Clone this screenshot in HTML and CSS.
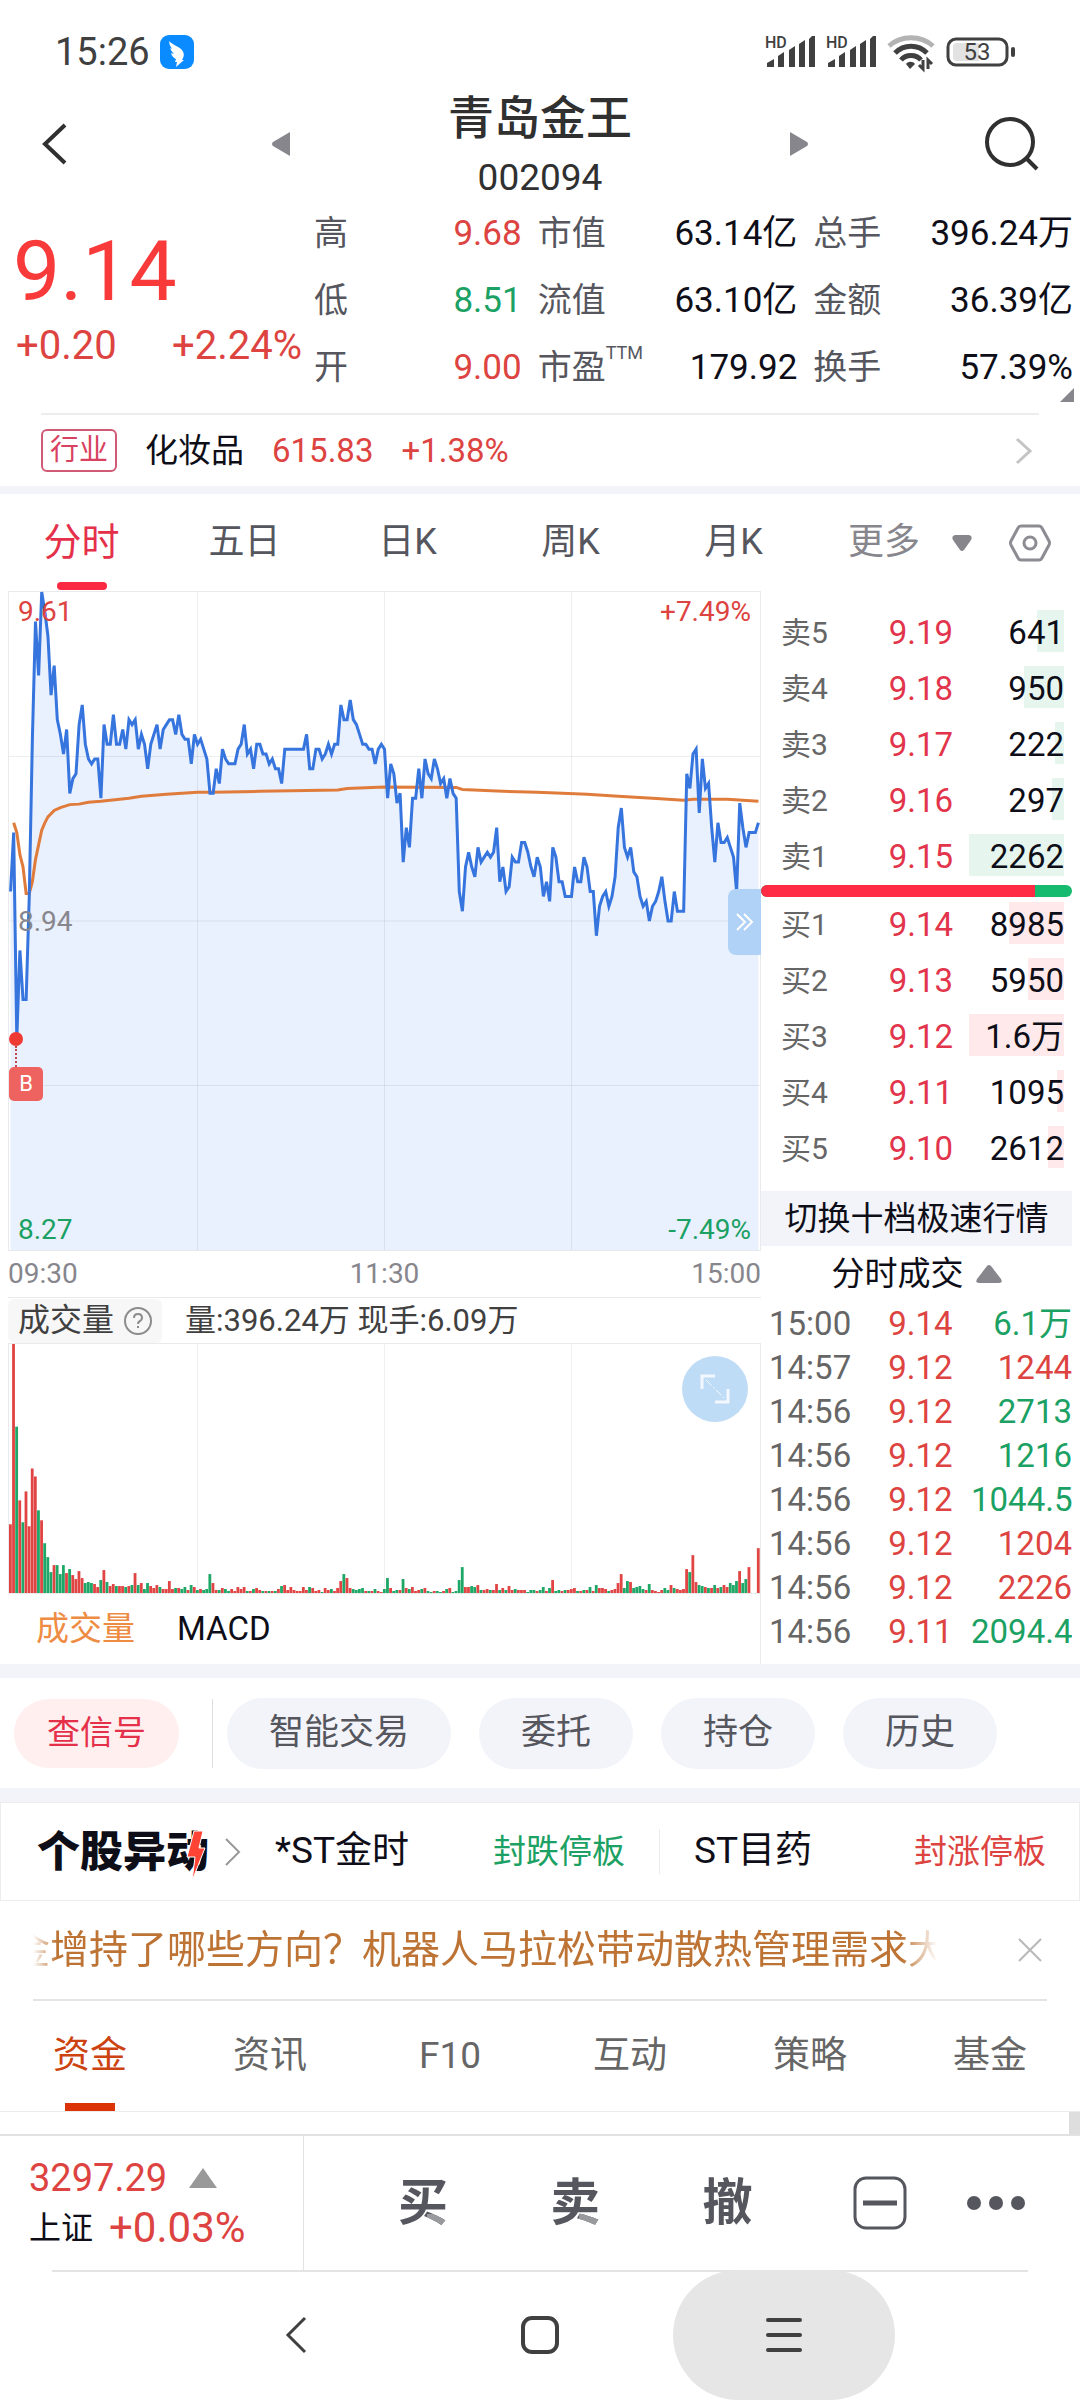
FILE: index.html
```html
<!DOCTYPE html>
<html lang="zh-CN">

<head>
    <meta charset="UTF-8">
    <meta name="viewport" content="width=device-width, initial-scale=1.0">
    <title>青岛金王 002094</title>
    <link rel="stylesheet" href="styles.css">
</head>

<body>
    <div class="status-bar">
        <span class="clock">15:26</span>
        <svg class="app-icon" width="34" height="34" viewBox="0 0 34 34">
            <rect width="34" height="34" rx="9" fill="#0a8bff"/>
            <path d="M9 6c2 3 9 5 13 9q3 4 1 8l-1 2h2l-8 7 1-5h-2l1-3q-4-2-5-6l3 1q-3-3-4-6l2 1q-3-4-3-8z" fill="#fff"/>
        </svg>
        <div class="status-icons">
            <svg width="50" height="34" viewBox="0 0 50 34">
                <text x="0" y="13" class="hd">HD</text>
                <path d="M2 32v-4l7-4v8zM13 32V21l6-4v15zM24 32V15l6-4v21zM34 32V9l6-4v27zM44 32V4l3-3h3v31z" fill="#404040"/>
            </svg>
            <svg width="50" height="34" viewBox="0 0 50 34">
                <text x="0" y="13" class="hd">HD</text>
                <path d="M2 32v-4l7-4v8zM13 32V21l6-4v15zM24 32V15l6-4v21zM34 32V9l6-4v27zM44 32V4l3-3h3v31z" fill="#404040"/>
            </svg>
            <svg width="48" height="36" viewBox="0 0 48 36" fill="none" stroke-width="5">
                <path d="M2 12c12-11 32-11 44 0" stroke="#b3b3b3"/>
                <path d="M8 19c9-9 23-9 32 0M14 26c5-6 15-6 20 0" stroke="#404040"/>
                <path d="M19 30c2-3 7-3 9 0l-5 5z" fill="#404040"/>
                <path d="M36 26v9l-4-4M41 35v-9l4 4" stroke="#404040" stroke-width="3"/>
            </svg>
            <svg width="70" height="30" viewBox="0 0 70 30">
                <rect x="2" y="2" width="59" height="26" rx="8" fill="none" stroke="#404040" stroke-width="3"/>
                <path d="M11 6h22v18H11q-4 0-4-4V10q0-4 4-4z" fill="#e2e2e2"/>
                <rect x="65" y="10" width="4" height="10" rx="2" fill="#404040"/>
                <text x="31" y="23" text-anchor="middle" class="battery">53</text>
            </svg>
        </div>
    </div>

    <header class="title-bar">
        <button type="button" aria-label="返回">
            <svg width="28" height="44" viewBox="0 0 28 44" fill="none" stroke="#303030" stroke-width="4"><path d="M25 3L5 22l20 19"/></svg>
        </button>
        <button type="button" aria-label="上一只">
            <svg width="20" height="26" viewBox="0 0 20 26"><path d="M19 1v24L2 15q-2-2 0-4z" fill="#87868d"/></svg>
        </button>
        <div class="stock-name">
            <h1>青岛金王</h1>
            <span>002094</span>
        </div>
        <button type="button" aria-label="下一只">
            <svg width="20" height="26" viewBox="0 0 20 26"><path d="M1 1v24l17-10q2-2 0-4z" fill="#87868d"/></svg>
        </button>
        <button type="button" class="search" aria-label="搜索">
            <svg width="56" height="56" viewBox="0 0 56 56" fill="none" stroke="#303030" stroke-width="4"><circle cx="26" cy="26" r="23"/><path d="M42 42l11 11"/></svg>
        </button>
    </header>

    <section class="quote">
        <div class="price">
            <strong>9.14</strong>
            <div class="change"><span>+0.20</span><span>+2.24%</span></div>
        </div>
        <dl>
            <div><dt>高</dt><dd class="up">9.68</dd></div>
            <div><dt>低</dt><dd class="down">8.51</dd></div>
            <div><dt>开</dt><dd class="up">9.00</dd></div>
        </dl>
        <dl>
            <div><dt>市值</dt><dd>63.14亿</dd></div>
            <div><dt>流值</dt><dd>63.10亿</dd></div>
            <div><dt>市盈<sup>TTM</sup></dt><dd>179.92</dd></div>
        </dl>
        <dl>
            <div><dt>总手</dt><dd>396.24万</dd></div>
            <div><dt>金额</dt><dd>36.39亿</dd></div>
            <div><dt>换手</dt><dd>57.39%</dd></div>
        </dl>
        <svg class="corner" width="14" height="14" viewBox="0 0 14 14"><path d="M14 0v14H0z" fill="#87868d"/></svg>
    </section>

    <a class="industry" href="#">
        <span class="tag">行业</span>
        <span>化妆品</span>
        <span class="up">615.83</span>
        <span class="up">+1.38%</span>
        <svg width="18" height="28" viewBox="0 0 18 28" fill="none" stroke="#c4c4c4" stroke-width="3"><path d="M2 2l13 12L2 26"/></svg>
    </a>

    <nav class="chart-tabs">
        <button type="button" class="active">分时</button>
        <button type="button">五日</button>
        <button type="button">日K</button>
        <button type="button">周K</button>
        <button type="button">月K</button>
        <div class="more">
            <button type="button">更多
                <svg width="20" height="16" viewBox="0 0 20 16"><path d="M3 0h14q4 1 2 5l-7 10q-2 2-4 0L1 5Q-1 1 3 0z" fill="#87868d"/></svg>
            </button>
            <button type="button" aria-label="设置">
                <svg width="42" height="38" viewBox="0 0 42 38" fill="none" stroke="#8c8c92" stroke-width="3"><path d="M12 2h18q2 0 3 2l7 13q1 2 0 4l-7 13q-1 2-3 2H12q-2 0-3-2L2 21q-1-2 0-4L9 4q1-2 3-2z"/><circle cx="21" cy="19" r="6"/></svg>
            </button>
        </div>
    </nav>

    <main class="market">
        <div class="charts">
            <div class="price-chart">
                <svg id="price-svg" viewBox="0 0 241 134" preserveAspectRatio="none"></svg>
                <span class="label top-left up">9.61</span>
                <span class="label top-right up">+7.49%</span>
                <span class="label middle-left">8.94</span>
                <span class="label bottom-left down">8.27</span>
                <span class="label bottom-right down">-7.49%</span>
                <div class="buy-mark"><i></i><b>B</b></div>
                <button type="button" class="fold" aria-label="收起盘口">
                    <svg width="18" height="18" viewBox="0 0 18 18" fill="none" stroke="#fff" stroke-width="2"><path d="M1 1l8 8-8 8M8 1l8 8-8 8"/></svg>
                </button>
            </div>
            <div class="times"><span>09:30</span><span>11:30</span><span>15:00</span></div>
            <div class="volume-head">
                <button type="button">成交量
                    <svg width="28" height="28" viewBox="0 0 28 28" fill="none" stroke="#8c8c8c" stroke-width="2"><circle cx="14" cy="14" r="13"/><path d="M10 11q0-4 4-4t4 4q0 2-2 3t-2 3M14 19v2"/></svg>
                </button>
                <span>量:396.24万 现手:6.09万</span>
            </div>
            <div class="volume-chart">
                <svg id="volume-svg" viewBox="0 0 241 250" preserveAspectRatio="none"></svg>
                <button type="button" class="expand" aria-label="放大">
                    <svg width="30" height="30" viewBox="0 0 30 30" fill="none" stroke="#fff" stroke-opacity="0.8" stroke-width="3"><path d="M2 15V2h13M28 15v13H15"/><path d="M6 6l18 18" stroke-width="1" stroke-dasharray="8 2 2 2"/></svg>
                </button>
            </div>
            <div class="sub-tabs">
                <button type="button" class="active">成交量</button>
                <button type="button">MACD</button>
            </div>
        </div>

        <aside class="book">
            <table class="orders sell">
                <tr><th>卖5</th><td>9.19</td><td><i style="width: 28%"></i><span>641</span></td></tr>
                <tr><th>卖4</th><td>9.18</td><td><i style="width: 42%"></i><span>950</span></td></tr>
                <tr><th>卖3</th><td>9.17</td><td><i style="width: 10%"></i><span>222</span></td></tr>
                <tr><th>卖2</th><td>9.16</td><td><i style="width: 13%"></i><span>297</span></td></tr>
                <tr><th>卖1</th><td>9.15</td><td><i style="width: 100%"></i><span>2262</span></td></tr>
            </table>
            <div class="ratio"><i style="width: 88%"></i></div>
            <table class="orders buy">
                <tr><th>买1</th><td>9.14</td><td><i style="width: 58%"></i><span>8985</span></td></tr>
                <tr><th>买2</th><td>9.13</td><td><i style="width: 38%"></i><span>5950</span></td></tr>
                <tr><th>买3</th><td>9.12</td><td><i style="width: 100%"></i><span>1.6万</span></td></tr>
                <tr><th>买4</th><td>9.11</td><td><i style="width: 7%"></i><span>1095</span></td></tr>
                <tr><th>买5</th><td>9.10</td><td><i style="width: 17%"></i><span>2612</span></td></tr>
            </table>
            <button type="button" class="switch">切换十档极速行情</button>
            <button type="button" class="deals-title">分时成交
                <svg width="26" height="18" viewBox="0 0 26 18"><path d="M11 1q2-2 4 0l10 13q2 4-2 4H3q-4 0-2-4z" fill="#87868d"/></svg>
            </button>
            <div class="deals">
                <table>
                    <tr><td>15:00</td><td>9.14</td><td class="down">6.1万</td></tr>
                    <tr><td>14:57</td><td>9.12</td><td class="up">1244</td></tr>
                    <tr><td>14:56</td><td>9.12</td><td class="down">2713</td></tr>
                    <tr><td>14:56</td><td>9.12</td><td class="down">1216</td></tr>
                    <tr><td>14:56</td><td>9.12</td><td class="down">1044.5</td></tr>
                    <tr><td>14:56</td><td>9.12</td><td class="up">1204</td></tr>
                    <tr><td>14:56</td><td>9.12</td><td class="up">2226</td></tr>
                    <tr><td>14:56</td><td>9.11</td><td class="down">2094.4</td></tr>
                </table>
            </div>
        </aside>
    </main>

    <div class="actions">
        <button type="button" class="signal">查信号</button>
        <button type="button">智能交易</button>
        <button type="button">委托</button>
        <button type="button">持仓</button>
        <button type="button">历史</button>
    </div>

    <section class="movers">
        <a class="movers-logo" href="#"><b>个股异动</b>
            <svg class="bolt" width="20" height="54" viewBox="0 0 20 54"><path d="M8 2h9l-4 17h6L6 52l3-24H1z" fill="#ff4436" stroke="#fff" stroke-width="1"/></svg>
            <svg width="16" height="28" viewBox="0 0 16 28" fill="none" stroke="#999" stroke-width="2"><path d="M1 1l13 13L1 27"/></svg>
        </a>
        <a class="mover" href="#"><span>*ST金时</span><em class="down">封跌停板</em></a>
        <a class="mover" href="#"><span>ST目药</span><em class="up">封涨停板</em></a>
    </section>

    <div class="notice">
        <p>金增持了哪些方向？机器人马拉松带动散热管理需求大</p>
        <button type="button" aria-label="关闭">
            <svg width="24" height="24" viewBox="0 0 24 24" stroke="#b8b8b8" stroke-width="2"><path d="M1 1l22 22M23 1L1 23"/></svg>
        </button>
    </div>

    <nav class="info-tabs">
        <a class="active" href="#">资金</a>
        <a href="#">资讯</a>
        <a href="#">F10</a>
        <a href="#">互动</a>
        <a href="#">策略</a>
        <a href="#">基金</a>
    </nav>
    <div class="info-body"></div>

    <footer class="trade-bar">
        <a class="index" href="#">
            <span><b>3297.29</b>
                <svg width="28" height="20" viewBox="0 0 28 20"><path d="M14 0l14 20H0z" fill="#999"/></svg>
            </span>
            <span class="index-change">上证 <b>+0.03%</b></span>
        </a>
        <div class="trade-buttons">
            <button type="button"><span class="two-tone">买</span></button>
            <button type="button"><span class="two-tone">卖</span></button>
            <button type="button">撤</button>
            <button type="button" aria-label="减自选">
                <svg width="54" height="54" viewBox="0 0 54 54" fill="none" stroke="#55565e"><rect x="2" y="2" width="50" height="50" rx="11" stroke-width="3"/><path d="M10 27h34" stroke-width="5"/></svg>
            </button>
            <button type="button" aria-label="更多">
                <svg width="60" height="16" viewBox="0 0 60 16" fill="#55565e"><circle cx="8" cy="8" r="7"/><circle cx="30" cy="8" r="7"/><circle cx="52" cy="8" r="7"/></svg>
            </button>
        </div>
    </footer>

    <div class="system-nav">
        <button type="button" aria-label="返回">
            <svg width="22" height="38" viewBox="0 0 22 38" fill="none" stroke="#404040" stroke-width="3"><path d="M20 2L3 19l17 17"/></svg>
        </button>
        <button type="button" aria-label="主页">
            <svg width="38" height="38" viewBox="0 0 38 38" fill="none" stroke="#404040" stroke-width="4"><rect x="2" y="2" width="34" height="34" rx="9"/></svg>
        </button>
        <button type="button" class="pressed" aria-label="最近任务">
            <svg width="38" height="36" viewBox="0 0 38 36" stroke="#404040" stroke-width="4" stroke-linecap="round"><path d="M3 3h32M3 18h32M3 33h32"/></svg>
        </button>
    </div>
    <script src="chart.js"></script>
</body>

</html>
```
FILE: styles.css
```css
* {
    box-sizing: border-box;
}

body {
    margin: 0;
    background-color: #fff;
    color: #0e0e18;
    font-family: Roboto, "Noto Sans CJK SC", sans-serif;
    font-size: 34px;
    line-height: 1.2;
}

button {
    padding: 0;
    border: none;
    background: none;
    color: inherit;
    font: inherit;
    cursor: pointer;
}

a {
    color: inherit;
    text-decoration: none;
}

svg {
    display: block;
    flex: none;
    overflow: visible;
}

table {
    width: 100%;
    border-collapse: collapse;
    table-layout: fixed;
}

th,
td {
    padding: 0;
    font-weight: normal;
}

.up {
    color: #dd4340;
}

.down {
    color: #1ba163;
}

/* status bar */
.status-bar {
    display: flex;
    align-items: center;
    gap: 10px;
    height: 80px;
    padding: 24px 64px 0 55px;
}

.clock {
    color: #404040;
    font-size: 38px;
    line-height: 56px;
}

.status-icons {
    display: flex;
    align-items: center;
    gap: 11px;
    margin-left: auto;
}

.hd {
    fill: #404040;
    font-size: 16px;
    font-weight: 500;
}

.battery {
    fill: #404040;
    font-size: 24px;
}

/* title */
.title-bar {
    display: grid;
    grid-template-columns: 231px 20px 1fr 20px 231px;
    align-items: center;
    justify-items: start;
    height: 120px;
    padding: 0 40px;
}

.title-bar .search {
    justify-self: end;
}

.stock-name {
    padding-top: 8px;
    color: #303030;
    font-size: 37px;
    line-height: 60px;
    text-align: center;
    justify-self: center;
}

.stock-name h1 {
    margin: 0;
    font-size: 46px;
    font-weight: 500;
}

.stock-name span {
    display: block;
}

/* quote */
.quote {
    position: relative;
    display: grid;
    grid-template-columns: 282px 208fr 260fr 260fr;
    gap: 16px;
    height: 213px;
    padding: 0 7px 0 16px;
}

.price {
    padding-top: 22px;
    color: #f83b3a;
}

.price strong {
    display: block;
    margin-left: -3px;
    font-size: 84px;
    font-weight: normal;
    line-height: 100px;
}

.change {
    display: flex;
    justify-content: space-between;
    width: 286px;
    color: #dd4340;
    font-size: 40px;
    line-height: 48px;
}

.quote dl {
    margin: 0;
    line-height: 67px;
}

.quote dl div {
    display: flex;
    justify-content: space-between;
    height: 67px;
}

.quote dt {
    color: #55565e;
}

.quote dd {
    margin: 0;
    font-size: 35px;
}

.quote sup {
    font-size: 18px;
    line-height: 0;
    vertical-align: 20px;
}

.corner {
    position: absolute;
    right: 6px;
    bottom: 11px;
}

.industry {
    display: flex;
    align-items: center;
    height: 73px;
    margin: 0 41px;
    border-top: 2px solid #ededed;
    font-size: 33px;
}

.industry .tag {
    width: 76px;
    margin-right: 28px;
    border: 2px solid #cf5b77;
    border-radius: 6px;
    color: #d8415f;
    font-size: 29px;
    line-height: 39px;
    text-align: center;
}

.industry .up {
    margin-left: 28px;
}

.industry svg {
    margin-left: auto;
    margin-right: 6px;
}

/* period tabs */
.chart-tabs {
    display: grid;
    grid-template-columns: repeat(5, 1fr) 265px;
    height: 105px;
    border-top: 8px solid #f3f4f9;
    color: #55565e;
    font-size: 36px;
}

.chart-tabs .active {
    position: relative;
    color: #e5304a;
    font-size: 38px;
}

.chart-tabs .active::after {
    content: "";
    position: absolute;
    bottom: 1px;
    left: 50%;
    width: 50px;
    height: 8px;
    margin-left: -25px;
    border-radius: 4px;
    background-color: #fb2941;
}

.more {
    display: flex;
    align-items: center;
    justify-content: space-between;
    padding: 0 29px 0 33px;
    color: #87868d;
}

.more button {
    display: flex;
    align-items: center;
    gap: 32px;
}

/* charts */
.market {
    display: grid;
    grid-template-columns: minmax(0, 1fr) 311px;
    padding: 0 8px;
}

.price-chart {
    position: relative;
    height: 660px;
    border: 1px solid #e9eaee;
}

.price-chart > svg,
.volume-chart > svg {
    width: 100%;
    height: 100%;
}

.price-chart path,
.price-chart polyline {
    vector-effect: non-scaling-stroke;
}

.grid-line {
    fill: none;
    stroke: #000;
    stroke-opacity: 0.07;
    stroke-width: 1px;
    vector-effect: non-scaling-stroke;
}

.area {
    fill: #e9f0fe;
}

.line {
    fill: none;
    stroke: #3674de;
    stroke-width: 3px;
}

.average {
    fill: none;
    stroke: #e07c3b;
    stroke-width: 3px;
}

.label {
    position: absolute;
    font-size: 28px;
    line-height: 40px;
}

.top-left {
    top: 0;
    left: 9px;
}

.top-right {
    top: 0;
    right: 9px;
}

.middle-left {
    top: 310px;
    left: 9px;
    color: #87868d;
}

.bottom-left {
    bottom: 0;
    left: 9px;
}

.bottom-right {
    bottom: 0;
    right: 9px;
}

.buy-mark {
    position: absolute;
    top: 440px;
    left: 0;
}

.buy-mark i {
    display: block;
    width: 14px;
    height: 14px;
    border-radius: 50%;
    background-color: #ef3a34;
}

.buy-mark::after {
    content: "";
    position: absolute;
    top: 14px;
    left: 6px;
    height: 21px;
    border-left: 2px dotted #c4464a;
}

.buy-mark b {
    display: block;
    width: 34px;
    margin-top: 21px;
    border-radius: 5px;
    background-color: #ee625f;
    color: #fff;
    font-size: 22px;
    font-weight: normal;
    line-height: 34px;
    text-align: center;
}

.fold {
    position: absolute;
    top: 297px;
    right: -1px;
    display: flex;
    align-items: center;
    justify-content: center;
    width: 33px;
    height: 66px;
    border-radius: 8px 0 0 8px;
    background-color: #b0d2f6;
}

.times {
    display: flex;
    justify-content: space-between;
    color: #87868d;
    font-size: 28px;
    line-height: 46px;
}

.volume-head {
    display: flex;
    align-items: center;
    gap: 23px;
    height: 46px;
    border-top: 1px solid #e9eaee;
    color: #404040;
    font-size: 31px;
}

.volume-head button {
    display: flex;
    align-items: center;
    gap: 10px;
    height: 44px;
    padding: 0 10px;
    border-radius: 6px;
    background-color: #f7f7f7;
    font-size: 32px;
}

.volume-chart {
    position: relative;
    height: 251px;
    border: 1px solid #e9eaee;
}

.bar-up {
    fill: #e04544;
}

.bar-down {
    fill: #1ea766;
}

.expand {
    position: absolute;
    top: 12px;
    right: 12px;
    display: flex;
    align-items: center;
    justify-content: center;
    width: 66px;
    height: 66px;
    border-radius: 50%;
    background-color: #bfdcf6;
}

.sub-tabs {
    display: flex;
    gap: 42px;
    height: 70px;
    padding-left: 28px;
    border-right: 1px solid #e9eaee;
    font-size: 33px;
}

.sub-tabs .active {
    color: #ee8c43;
}

/* order book */
.book {
    padding-top: 14px;
}

.orders {
    margin-left: 20px;
    width: 283px;
}

.orders tr {
    height: 56px;
}

.orders th {
    width: 92px;
    color: #666;
    font-size: 30px;
    text-align: left;
}

.orders td {
    width: 96px;
    color: #e2354c;
    font-size: 33px;
    text-align: center;
}

.orders td:last-child {
    position: relative;
    width: auto;
    color: #0e0e18;
    text-align: right;
}

.orders i {
    position: absolute;
    top: 5px;
    right: 0;
    height: 42px;
    background-color: #e6f6ef;
}

.orders span {
    position: relative;
}

.buy i {
    background-color: #ffe9eb;
}

.ratio {
    height: 12px;
    border-radius: 6px;
    background-color: #17bb70;
    overflow: hidden;
}

.ratio i {
    display: block;
    height: 100%;
    background-color: #ff2a43;
}

.switch {
    width: 100%;
    margin-top: 14px;
    background-color: #f3f4f9;
    font-size: 33px;
    line-height: 55px;
}

.deals-title {
    display: flex;
    align-items: center;
    justify-content: center;
    gap: 12px;
    width: 100%;
    font-size: 33px;
    line-height: 56px;
}

.deals {
    height: 362px;
    padding-left: 8px;
    overflow: hidden;
    font-size: 33px;
}

.deals tr {
    height: 44px;
}

.deals td {
    line-height: 44px;
    color: #dd4340;
    text-align: center;
}

.deals td:first-child {
    color: #666;
    text-align: left;
}

.deals td:last-child {
    text-align: right;
}

.deals td.down {
    color: #1ba163;
}

/* shortcuts */
.actions {
    display: flex;
    align-items: center;
    gap: 28px;
    height: 138px;
    padding-left: 14px;
    border-top: 14px solid #f3f4f9;
    border-bottom: 14px solid #f3f4f9;
    color: #55565e;
    font-size: 35px;
}

.actions button {
    height: 71px;
    padding: 0 42px;
    border-radius: 36px;
    background-color: #f3f4f9;
}

.actions .signal {
    position: relative;
    height: 69px;
    margin-right: 20px;
    padding: 0 33px;
    background-color: #ffefef;
    color: #e5304a;
    font-size: 33px;
}

.signal::after {
    content: "";
    position: absolute;
    top: 0;
    right: -34px;
    height: 69px;
    border-left: 1px solid #ddd;
}

.movers {
    display: grid;
    grid-template-columns: 204px 350fr 387fr;
    align-items: center;
    gap: 34px;
    height: 99px;
    padding: 0 33px 0 36px;
    border: 1px solid #ededed;
    font-size: 37px;
}

.movers-logo {
    position: relative;
    display: flex;
    align-items: center;
    gap: 16px;
}

.movers-logo b {
    font-size: 43px;
    font-weight: 900;
    line-height: 60px;
}

.bolt {
    position: absolute;
    top: 7px;
    left: 149px;
}

.mover {
    display: flex;
    align-items: center;
    justify-content: space-between;
}

.mover + .mover {
    padding-left: 34px;
    border-left: 1px solid #ececec;
}

.mover em {
    font-size: 33px;
    font-style: normal;
}

.notice {
    display: flex;
    align-items: center;
    height: 100px;
    margin: 0 33px;
    border-bottom: 2px solid #e4e4e4;
    color: #bd7334;
    font-size: 39px;
}

.notice p {
    flex: 1;
    margin: 0 81px 0 0;
    text-indent: -22px;
    line-height: 60px;
    white-space: nowrap;
    overflow: hidden;
    -webkit-mask-image: linear-gradient(90deg, transparent, #000 24px, #000 calc(100% - 36px), transparent);
    mask-image: linear-gradient(90deg, transparent, #000 24px, #000 calc(100% - 36px), transparent);
}

.notice button {
    margin-right: 5px;
}

.info-tabs {
    display: grid;
    grid-template-columns: repeat(6, 1fr);
    border-bottom: 1px solid #ececec;
    color: #666;
    font-size: 37px;
    line-height: 110px;
    text-align: center;
}

.info-tabs .active {
    position: relative;
    color: #cc4210;
}

.info-tabs .active::after {
    content: "";
    position: absolute;
    bottom: 0;
    left: 50%;
    width: 50px;
    height: 8px;
    margin-left: -25px;
    background-color: #dc3306;
}

.info-body {
    height: 22px;
    border-right: 11px solid #dedede;
}

/* bottom bars */
.trade-bar {
    display: flex;
    height: 136px;
    border-top: 2px solid #e2e2e2;
}

.index {
    width: 304px;
    padding: 17px 0 0 29px;
    border-right: 1px solid #e2e2e2;
    font-size: 32px;
}

.index span {
    display: flex;
    align-items: center;
    gap: 22px;
    line-height: 50px;
}

.index .index-change {
    gap: 16px;
}

.index b {
    color: #dd4340;
    font-size: 38px;
    font-weight: normal;
}

.index .index-change b {
    font-size: 42px;
}

.trade-buttons {
    display: grid;
    flex: 1;
    grid-template-columns: repeat(4, 152fr) 80fr;
    padding: 0 44px 0 43px;
    color: #55565e;
    font-size: 50px;
    font-weight: bold;
}

.trade-buttons button {
    display: flex;
    align-items: center;
    justify-content: center;
}

/* the last stroke of the character is lighter */
.two-tone {
    background: linear-gradient(#999a9e, #999a9e) right bottom / 21px 19px no-repeat, #55565e;
    -webkit-background-clip: text;
    background-clip: text;
    color: transparent;
}

.system-nav {
    display: flex;
    justify-content: center;
    gap: 22px;
    height: 130px;
    margin: 0 52px;
    border-top: 2px solid #e4e4e4;
}

.system-nav button {
    display: flex;
    align-items: center;
    justify-content: center;
    width: 222px;
    height: 130px;
    margin-top: -2px;
    border-radius: 65px;
}

.system-nav .pressed {
    background-color: #e6e6e6;
}
```
FILE: chart.js
```js
// one value per minute, in cents above the 8.94 close
var prices = [
    6, 18, -24, -6, -16, -16, 5, 37, 61, 50, 67, 63, 58, 46, 52, 41, 38, 34, 39, 26,
    29, 30, 40, 44, 36, 33, 32, 33, 33, 25, 40, 36, 36, 42, 36, 36, 39, 35, 41, 40,
    41, 35, 38, 36, 31, 36, 38, 40, 35, 39, 40, 41, 41, 38, 42, 38, 37, 37, 32, 38,
    36, 37, 35, 33, 26, 26, 31, 28, 35, 33, 32, 32, 32, 35, 36, 40, 34, 35, 31, 36,
    36, 34, 34, 32, 33, 31, 31, 28, 35, 35, 35, 35, 35, 35, 35, 38, 31, 31, 35, 35,
    33, 34, 36, 34, 36, 36, 44, 41, 41, 45, 41, 40, 38, 36, 36, 35, 35, 32, 35, 36,
    35, 25, 32, 30, 24, 26, 12, 19, 15, 25, 25, 31, 25, 33, 30, 29, 33, 31, 28, 29,
    25, 29, 26, 25, 6, 2, 11, 14, 11, 9, 15, 12, 13, 14, 13, 14, 19, 8, 11, 6,
    7, 13, 12, 12, 16, 16, 14, 11, 9, 13, 11, 5, 8, 4, 15, 13, 8, 8, 5, 5,
    5, 11, 8, 8, 13, 11, 6, 6, -3, 3, 5, 6, 3, 5, 9, 19, 23, 15, 13, 15,
    10, 9, 5, 3, 4, 0, 3, 4, 6, 9, 4, 0, 0, 6, 2, 2, 2, 30, 27, 34,
    35, 22, 33, 27, 28, 19, 12, 20, 16, 16, 17, 15, 13, 6, 24, 19, 15, 18, 18, 18, 20
];

// [minute, cents]
var average = [
    [1, 20], [2, 18], [3, 13.5], [4, 11], [5, 5.6], [6, 5.6], [7, 8], [8, 12.5], [9, 15.5], [10, 18.5],
    [11, 20], [12, 21.2], [14, 22.5], [16, 23.1], [19, 23.7], [22, 23.8], [25, 24.2], [29, 24.4],
    [38, 25], [42, 25.4], [50, 25.8], [60, 26.2], [65, 26.2], [80, 26.4], [105, 26.7], [108, 27],
    [120, 27.3], [143, 27.2], [145, 26.8], [158, 26.4], [169, 26.2], [185, 25.8], [195, 25.4],
    [206, 25], [216, 24.6], [219, 24.8], [230, 24.8], [240, 24.4]
];

// negative = falling minute
var volumes = [
    69, 250, -167, 93, -71, 102, 67, 125, 117, -83, 73, -50, -36, -21, 28, -28, -19, -28, 20, -24,
    18, 14, 22, 15, -10, -11, -10, 9, 6, -13, 23, -11, 7, 9, -7, 7, 7, -6, 7, -8,
    20, -8, 10, -4, -10, 7, 5, 8, -6, 4, 4, 12, 4, -5, 5, -4, -6, 3, -8, 6,
    -3, 4, -3, -4, -19, 10, 3, -3, 5, -4, -2, 4, 2, 6, 4, 6, -2, 2, -4, 5,
    3, -2, 2, -2, 2, -2, 4, -7, 8, 3, 6, 3, 2, 2, 6, 3, -6, 5, 2, 3,
    -1, 5, 3, -4, 2, 5, 12, -19, 15, 5, -4, -3, -4, -5, 2, -2, 2, -4, 2, 1,
    -4, -15, 5, -2, -3, 3, -14, 5, -4, 6, 2, 3, -4, 5, -2, -1, 2, -2, -1, 2,
    -4, 5, -1, -2, -13, -26, 6, 6, -7, -6, 8, -3, 3, 4, -3, 3, 9, -3, 5, -3,
    7, 3, -4, 3, 3, 3, -1, -3, -3, 2, -3, -6, 2, -5, 13, -2, -3, 2, -3, 3,
    4, 5, -2, 2, -3, 3, -6, 2, -8, 5, 5, 4, -2, 3, 4, 10, 19, -5, -12, 11,
    -5, -6, -7, -4, 3, -9, 3, 2, 1, 3, -5, -3, 8, -5, 4, 3, 4, 24, -21, 38,
    11, -8, -7, 6, -5, 5, -8, 5, -6, 8, 6, -10, -8, -12, 22, -10, -14, 26, 0, 0, 45
];

function point(minute, cents) {
    return (minute + 0.5) + "," + (67 - cents);
}

var line = prices.map(function (cents, i) { return point(i, cents); }).join(" ");
var averageLine = average.map(function (p) { return point(p[0], p[1]); }).join(" ");

document.getElementById("price-svg").innerHTML =
    '<polygon class="area" points="0.5,134 ' + line + ' 240.5,134"/>' +
    '<path class="grid-line" d="M60.5 0V134M120.5 0V134M180.5 0V134M0 33.5H241M0 67H241M0 100.5H241"/>' +
    '<polyline class="average" points="' + averageLine + '"/>' +
    '<polyline class="line" points="' + line + '"/>';

var bars = volumes.map(function (v, i) {
    var h = Math.abs(v);
    return '<rect class="' + (v > 0 ? "bar-up" : "bar-down") + '" x="' + i + '" y="' + (250 - h) + '" width="0.9" height="' + h + '"/>';
}).join("");

document.getElementById("volume-svg").innerHTML =
    '<path class="grid-line" d="M60.5 0V250M120.5 0V250M180.5 0V250"/>' + bars;
```
